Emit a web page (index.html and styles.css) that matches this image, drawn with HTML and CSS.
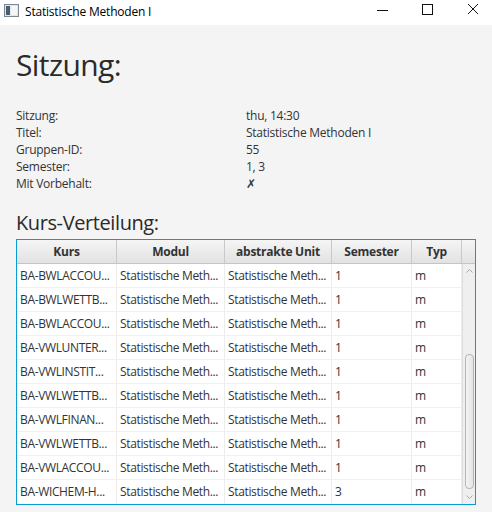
FILE: index.html
```html
<!DOCTYPE html>
<html>
<head>
<meta charset="utf-8">
<link rel="stylesheet" href="styles.css">
</head>
<body>
<div class="window">
  <div class="titlebar">
    <svg class="appicon" width="16" height="14" viewBox="0 0 16 14">
      <rect x="0.5" y="0.5" width="14" height="12" fill="#dfe6ee" stroke="#7d8794"/>
      <rect x="2" y="2" width="4" height="9" fill="#4e5d6e"/>
      <rect x="7" y="2" width="6" height="9" fill="#f4f6f8"/>
    </svg>
    <span class="title">Statistische Methoden I</span>
    <div class="controls">
      <svg class="ctl" width="46" height="25" viewBox="0 0 46 25"><line x1="23" y1="10.5" x2="34" y2="10.5" stroke="#111" stroke-width="1"/></svg>
      <svg class="ctl" width="46" height="25" viewBox="0 0 46 25"><rect x="22.5" y="4.5" width="10" height="10" fill="none" stroke="#111" stroke-width="1"/></svg>
      <svg class="ctl" width="46" height="25" viewBox="0 0 46 25"><path d="M22 4 L32 14 M32 4 L22 14" stroke="#111" stroke-width="1"/></svg>
    </div>
  </div>
  <div class="content">
    <h1 class="heading">Sitzung:</h1>
    <div class="info">
      <div class="label">Sitzung:</div><div class="value">thu, 14:30</div>
      <div class="label">Titel:</div><div class="value">Statistische Methoden I</div>
      <div class="label">Gruppen-ID:</div><div class="value">55</div>
      <div class="label">Semester:</div><div class="value">1, 3</div>
      <div class="label">Mit Vorbehalt:</div><div class="value">✗</div>
    </div>
    <h2 class="subheading">Kurs-Verteilung:</h2>
    <div class="tablebox">
      <div class="thead">
        <div class="th">Kurs</div>
        <div class="th">Modul</div>
        <div class="th">abstrakte Unit</div>
        <div class="th">Semester</div>
        <div class="th">Typ</div>
        <div class="th corner"></div>
      </div>
      <div class="tbody">
        <div class="rows">
          <div class="row"><div class="td">BA-BWLACCOU...</div><div class="td">Statistische Meth...</div><div class="td">Statistische Meth...</div><div class="td">1</div><div class="td">m</div></div>
          <div class="row"><div class="td">BA-BWLWETTB...</div><div class="td">Statistische Meth...</div><div class="td">Statistische Meth...</div><div class="td">1</div><div class="td">m</div></div>
          <div class="row"><div class="td">BA-BWLACCOU...</div><div class="td">Statistische Meth...</div><div class="td">Statistische Meth...</div><div class="td">1</div><div class="td">m</div></div>
          <div class="row"><div class="td">BA-VWLUNTER...</div><div class="td">Statistische Meth...</div><div class="td">Statistische Meth...</div><div class="td">1</div><div class="td">m</div></div>
          <div class="row"><div class="td">BA-VWLINSTIT...</div><div class="td">Statistische Meth...</div><div class="td">Statistische Meth...</div><div class="td">1</div><div class="td">m</div></div>
          <div class="row"><div class="td">BA-VWLWETTB...</div><div class="td">Statistische Meth...</div><div class="td">Statistische Meth...</div><div class="td">1</div><div class="td">m</div></div>
          <div class="row"><div class="td">BA-VWLFINAN...</div><div class="td">Statistische Meth...</div><div class="td">Statistische Meth...</div><div class="td">1</div><div class="td">m</div></div>
          <div class="row"><div class="td">BA-VWLWETTB...</div><div class="td">Statistische Meth...</div><div class="td">Statistische Meth...</div><div class="td">1</div><div class="td">m</div></div>
          <div class="row"><div class="td">BA-VWLACCOU...</div><div class="td">Statistische Meth...</div><div class="td">Statistische Meth...</div><div class="td">1</div><div class="td">m</div></div>
          <div class="row"><div class="td">BA-WICHEM-H...</div><div class="td">Statistische Meth...</div><div class="td">Statistische Meth...</div><div class="td">3</div><div class="td">m</div></div>
        </div>
        <div class="vscroll">
          <svg class="arrow" width="13" height="8" viewBox="0 0 13 8"><path d="M3.5 5.5 L6.5 2.5 L9.5 5.5" fill="none" stroke="#a8a8a8" stroke-width="1"/></svg>
          <div class="track"><div class="thumb"></div></div>
          <svg class="arrow" width="13" height="8" viewBox="0 0 13 8"><path d="M3.5 2.5 L6.5 5.5 L9.5 2.5" fill="none" stroke="#a8a8a8" stroke-width="1"/></svg>
        </div>
      </div>
    </div>
  </div>
</div>
</body>
</html>
```

FILE: styles.css
```css
* { box-sizing: border-box; }
html, body { margin: 0; padding: 0; }
body {
  width: 492px;
  height: 512px;
  background: #f4f4f4;
  font-family: "Open Sans", "Noto Sans", sans-serif;
  color: #333;
  overflow: hidden;
}
.titlebar {
  height: 25px;
  background: #ffffff;
  display: flex;
  align-items: center;
}
.appicon { margin-left: 4px; margin-top: -3px; }
.title {
  margin-left: 5px;
  font-size: 12px;
  letter-spacing: -0.2px;
  color: #000;
  margin-top: -2px;
}
.controls {
  margin-left: auto;
  display: flex;
  align-self: flex-start;
}
.ctl { display: block; }
.content { padding: 0 16px; }
.heading {
  margin: 22px 0 0 0;
  font-size: 30px;
  line-height: 36px;
  letter-spacing: -0.6px;
  font-weight: normal;
  color: #2a2a2a;
}
.info {
  margin-top: 24px;
  display: grid;
  grid-template-columns: 230px 1fr;
  font-size: 12px;
  line-height: 17px;
  letter-spacing: -0.25px;
}
.subheading {
  margin: 19px 0 0 0;
  font-size: 20px;
  line-height: 24px;
  letter-spacing: -0.4px;
  font-weight: normal;
  color: #2a2a2a;
}
.tablebox {
  margin-top: 4px;
  width: 460px;
  height: 266px;
  border: 1px solid #039ed3;
  box-shadow: inset 0 0 0 1px #b6e0f2;
  background: #fff;
  display: flex;
  flex-direction: column;
}
.thead {
  display: grid;
  grid-template-columns: 100px 108px 107px 80px 50px 13px;
  height: 24px;
  background: linear-gradient(#f5f5f5, #e2e2e2);
  border-bottom: 1px solid #c4c4c4;
}
.th {
  font-size: 12px;
  font-weight: bold;
  letter-spacing: -0.25px;
  text-align: center;
  line-height: 23px;
  border-right: 1px solid #c9c9c9;
  color: #333;
}
.th.corner { border-right: none; }
.tbody {
  display: flex;
  height: 240px;
}
.rows {
  width: 445px;
  display: flex;
  flex-direction: column;
}
.row {
  display: grid;
  grid-template-columns: 100px 108px 107px 80px 50px;
  height: 24px;
  border-bottom: 1px solid #f0f0f0;
  background: #fff;
}
.row:last-child { border-bottom: none; }
.td {
  font-size: 12px;
  line-height: 23px;
  letter-spacing: -0.35px;
  padding-left: 3px;
  border-right: 1px solid #ececec;
  white-space: nowrap;
  overflow: hidden;
  color: #333;
}
.vscroll {
  width: 13px;
  background: #efefef;
  border-left: 1px solid #dedede;
  display: flex;
  flex-direction: column;
  align-items: center;
}
.arrow { display: block; margin: 3px 0; flex: none; }
.track {
  flex: 1;
  width: 100%;
  display: flex;
  flex-direction: column;
  justify-content: flex-end;
  align-items: center;
  padding-bottom: 1px;
}
.thumb {
  width: 9px;
  height: 135px;
  background: linear-gradient(90deg, #f4f4f4, #e4e4e4);
  border: 1px solid #b5b5b5;
  border-radius: 4px;
}
```
